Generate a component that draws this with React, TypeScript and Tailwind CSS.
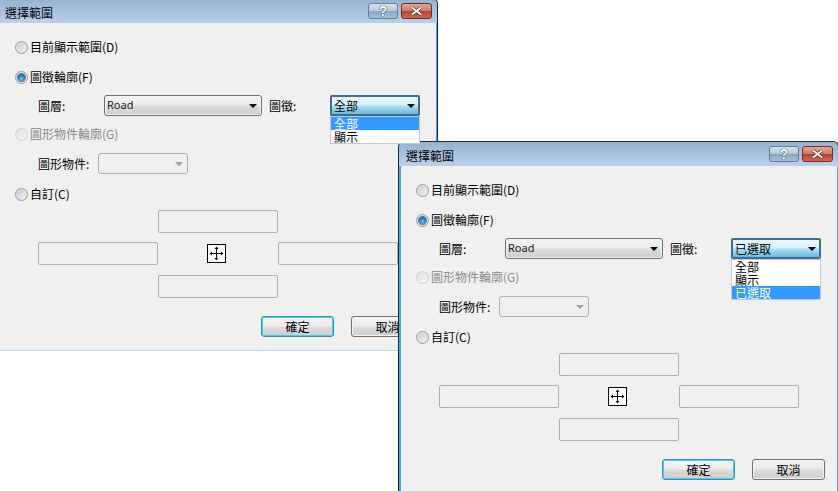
import React from "react";

const face = "[font-family:'Noto_Sans_CJK_TC','Noto_Sans',sans-serif] text-[12px]";
const cjk = `${face} leading-[14px]`;

function Radio({ label, checked, disabled }: { label: string; checked?: boolean; disabled?: boolean }) {
  return (
    <div className="flex h-[16px] items-center">
      <span
        className={`flex h-[13px] w-[13px] shrink-0 items-center justify-center rounded-full border ${
          disabled
            ? "border-[#cfcfcf] bg-gradient-to-br from-[#e2e2e2] to-[#f6f6f6]"
            : "border-[#9a9a9a] bg-gradient-to-br from-[#c4c4c4] to-[#f8f8f8] shadow-[inset_0_0_0_1px_#e6e6e6]"
        }`}
      >
        {checked && (
          <span className="h-[7px] w-[7px] rounded-full bg-[radial-gradient(circle_at_50%_65%,#62d0f5,#0f5fa8_70%)] shadow-[0_0_0_1px_#4a7ea8]" />
        )}
      </span>
      <span className={`ml-[2px] ${cjk} ${disabled ? "text-[#8a8a8a]" : "text-black"}`}>{label}</span>
    </div>
  );
}

function Arrow({ disabled }: { disabled?: boolean }) {
  return (
    <svg width="8" height="4" viewBox="0 0 8 4" className="shrink-0">
      <path d="M0 0H8L4 4Z" fill={disabled ? "#a0a0a0" : "#000000"} />
    </svg>
  );
}

function Combo({ width, value, latin }: { width: string; value: string; latin?: boolean }) {
  return (
    <div
      className={`flex h-[21px] ${width} items-center justify-between rounded-[3px] border border-[#707070] bg-[linear-gradient(#f4f4f4_0%,#ebebeb_48%,#dcdcdc_52%,#cdcdcd_100%)] pl-[2px] pr-[4px] shadow-[inset_0_0_0_1px_#f6f6f6]`}
    >
      <span className={latin ? "[font-family:'Noto_Sans',sans-serif] text-[11px] text-[#1a1a1a]" : `${cjk} text-black`}>{value}</span>
      <Arrow />
    </div>
  );
}

function FeatureCombo({ value, items }: { value: string; items: string[] }) {
  return (
    <div className="relative h-[21px] w-[90px]">
      <div className="flex h-[21px] w-[90px] items-center justify-between rounded-[2px] border-2 border-[#3c6f8e] bg-[linear-gradient(#eaf6fd_0%,#d9f0fc_45%,#a8def7_55%,#6fb6dc_100%)] pl-[2px] pr-[3px]">
        <span className={`${cjk} text-black`}>{value}</span>
        <Arrow />
      </div>
      <div className="absolute left-0 top-[21px] z-10 w-[90px] border border-[#c5c9d6] bg-white">
        {items.map((t) => (
          <div
            key={t}
            className={`h-[13px] pl-[3px] leading-[13px] ${face} ${t === value ? "bg-[#3399ff] text-white" : "text-black"}`}
          >
            {t}
          </div>
        ))}
      </div>
    </div>
  );
}

function Box({ className = "" }: { className?: string }) {
  return <div className={`h-[23px] w-[120px] rounded-[2px] border border-[#afafaf] bg-[#f0f0f0] ${className}`} />;
}

function Btn({ label, primary }: { label: string; primary?: boolean }) {
  return (
    <div
      className={`flex h-[21px] w-[73px] items-center justify-center rounded-[3px] border ${
        primary ? "border-[#3a8fb7] shadow-[inset_0_0_0_1px_#3fd0f2]" : "border-[#707070] shadow-[inset_0_0_0_1px_#f6f6f6]"
      } bg-[linear-gradient(#f4f4f4_0%,#ebebeb_48%,#dcdcdc_52%,#cdcdcd_100%)] ${cjk} text-black`}
    >
      {label}
    </div>
  );
}

function Dialog({ className, value, items }: { className: string; value: string; items: string[] }) {
  return (
    <div className={`absolute flex h-[353px] w-[441px] flex-col rounded-t-[6px] border-x border-t border-[#1f2a35] bg-[#49a5e0] ${className}`}>
      <div className="flex h-[24px] shrink-0 items-start justify-between rounded-t-[5px] bg-[linear-gradient(#97b2cf,#b9d1ea)] pl-[7px] pr-[5px]">
        <span className={`mt-[7px] ${cjk} text-black`}>選擇範圍</span>
        <div className="mt-[4px] flex gap-[3px]">
          <div className="flex h-[16px] w-[30px] items-center justify-center rounded-[3px] border border-[#5f7f9c] bg-[linear-gradient(#d5e2ef_0%,#b5c9dd_48%,#8aa5c0_52%,#a6c0da_100%)] [font-family:'Liberation_Sans',sans-serif] text-[14px] font-bold leading-none text-white [text-shadow:0_0_1px_#222,0_0_1px_#222]">
            ?
          </div>
          <div className="flex h-[16px] w-[31px] items-center justify-center rounded-[3px] border border-[#7a2a22] bg-[linear-gradient(#e0a89e_0%,#cf7a6c_48%,#b8402f_52%,#cf6a58_100%)]">
            <svg width="13" height="10" viewBox="0 0 13 10">
              <path d="M2 1.5 11 8.5M11 1.5 2 8.5" stroke="#5a1d15" strokeWidth="3.4" />
              <path d="M2 1.5 11 8.5M11 1.5 2 8.5" stroke="#ffffff" strokeWidth="2.2" />
            </svg>
          </div>
        </div>
      </div>
      <div className="ml-[2px] mr-[1px] flex flex-1 flex-col border-b border-[#b5d4f0] bg-[#f0f0f0] pl-[15px] pr-[7px] pt-[16px]">
        <Radio label="目前顯示範圍(D)" />
        <div className="mt-[14px]">
          <Radio label="圖徵輪廓(F)" checked />
        </div>
        <div className="mt-[10px] flex items-center pl-[23px]">
          <span className={`w-[66px] ${cjk} text-black`}>圖層:</span>
          <Combo width="w-[158px]" value="Road" latin />
          <span className={`ml-[7px] w-[61px] ${cjk} text-black`}>圖徵:</span>
          <FeatureCombo value={value} items={items} />
        </div>
        <div className="mt-[10px]">
          <Radio label="圖形物件輪廓(G)" disabled />
        </div>
        <div className="mt-[11px] flex items-center pl-[23px]">
          <span className={`w-[60px] ${cjk} text-black`}>圖形物件:</span>
          <div className="flex h-[21px] w-[90px] items-center justify-end rounded-[3px] border border-[#afafaf] bg-[#f0f0f0] pr-[4px]">
            <Arrow disabled />
          </div>
        </div>
        <div className="mt-[12px]">
          <Radio label="自訂(C)" />
        </div>
        <div className="ml-[23px] mt-[8px] grid grid-cols-[120px_120px_120px] grid-rows-[23px_23px_23px] gap-y-[9px]">
          <Box className="col-start-2" />
          <Box className="col-start-1 row-start-2" />
          <div className="col-start-2 row-start-2 flex items-start justify-center pt-[2px]">
            <svg width="19" height="19" viewBox="0 0 19 19" className="mr-[3px]">
              <rect x="0.5" y="0.5" width="18" height="18" fill="#fff" stroke="#000" />
              <path d="M9.5 3V16M3 9.5H16" stroke="#000" />
              <path d="M9.5 2.5 11.5 5H7.5ZM9.5 16.5 11.5 14H7.5ZM2.5 9.5 5 7.5V11.5ZM16.5 9.5 14 7.5V11.5Z" fill="#000" />
            </svg>
          </div>
          <Box className="col-start-3 row-start-2" />
          <Box className="col-start-2 row-start-3 mt-[1px]" />
        </div>
        <div className="mt-[19px] flex justify-end gap-[17px] pr-[5px]">
          <Btn label="確定" primary />
          <Btn label="取消" />
        </div>
      </div>
    </div>
  );
}

export default function App() {
  return (
    <div className="relative h-[491px] w-[838px] overflow-hidden bg-white">
      <Dialog className="left-[-3px] top-[-2px]" value="全部" items={["全部", "顯示"]} />
      <Dialog className="left-[398px] top-[141px]" value="已選取" items={["全部", "顯示", "已選取"]} />
    </div>
  );
}
